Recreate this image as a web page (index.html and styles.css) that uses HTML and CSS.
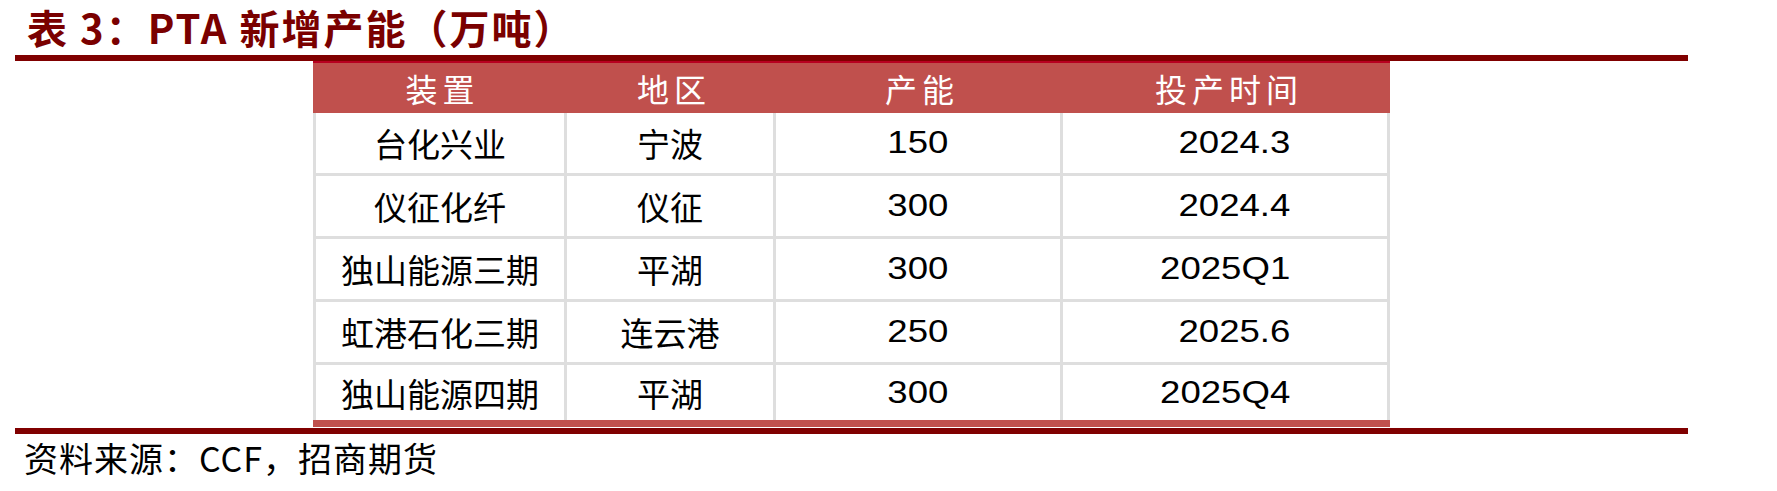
FILE: index.html
```
<!DOCTYPE html>
<html lang="zh-CN">
<head>
<meta charset="utf-8">
<title>表 3：PTA 新增产能（万吨）</title>
<link rel="stylesheet" href="styles.css">
</head>
<body>
<div class="page">
  <h1 class="title">表 3：PTA 新增产能（万吨）</h1>
  <div class="rule"></div>
  <div class="table-wrap">
    <div class="grid">
      <div class="th">装置</div>
      <div class="th">地区</div>
      <div class="th">产能</div>
      <div class="th">投产时间</div>

      <div class="td first">台化兴业</div>
      <div class="td">宁波</div>
      <div class="td"><span class="num">150</span></div>
      <div class="td"><span class="num shift">2024.3</span></div>

      <div class="td first">仪征化纤</div>
      <div class="td">仪征</div>
      <div class="td"><span class="num">300</span></div>
      <div class="td"><span class="num shift">2024.4</span></div>

      <div class="td first">独山能源三期</div>
      <div class="td">平湖</div>
      <div class="td"><span class="num">300</span></div>
      <div class="td"><span class="num">2025Q1</span></div>

      <div class="td first">虹港石化三期</div>
      <div class="td">连云港</div>
      <div class="td"><span class="num">250</span></div>
      <div class="td"><span class="num shift">2025.6</span></div>

      <div class="td first last">独山能源四期</div>
      <div class="td last">平湖</div>
      <div class="td last"><span class="num">300</span></div>
      <div class="td last"><span class="num">2025Q4</span></div>
    </div>
    <div class="endbar"></div>
  </div>
  <div class="rule bottom"></div>
  <p class="source">资料来源：CCF，招商期货</p>
</div>
</body>
</html>
```

FILE: styles.css
```
html, body {
  margin: 0;
  padding: 0;
  background: #ffffff;
}

.page {
  padding-left: 15px;
  width: 1673px;
  font-family: "Noto Sans CJK SC", "Noto Sans", sans-serif;
}

.title {
  margin: 0;
  height: 55px;
  line-height: 55px;
  padding-left: 12px;
  font-size: 40px;
  font-weight: 700;
  letter-spacing: 2px;
  color: #7a0000;
  white-space: nowrap;
}

.rule {
  height: 6px;
  background: #800000;
}

.rule.bottom {
  margin-top: 1px;
}

.table-wrap {
  margin-left: 298px;
  width: 1077px;
}

.grid {
  display: grid;
  grid-template-columns: 254px 209px 287px 327px;
  border-top: 2px solid #b80020;
}

.th {
  height: 50px;
  background: #c0504d;
  color: #ffffff;
  font-size: 32px;
  letter-spacing: 5px;
  padding-left: 5px;
  display: flex;
  align-items: center;
  justify-content: center;
}

.td {
  box-sizing: border-box;
  height: 63px;
  border-right: 3px solid #dedede;
  border-bottom: 3px solid #dedede;
  display: flex;
  align-items: center;
  justify-content: center;
  font-size: 33px;
  color: #000000;
}

.td.first {
  border-left: 3px solid #dedede;
}

.td.last {
  height: 55px;
  border-bottom: 0;
}

.num {
  display: inline-block;
  font-family: "Liberation Sans", Arial, sans-serif;
  font-size: 31px;
  transform: scaleX(1.18);
}

.num.shift {
  margin-left: 18px;
}

.endbar {
  height: 7px;
  background: #c0504d;
}

.source {
  margin: 0;
  height: 48px;
  line-height: 48px;
  padding-left: 9px;
  font-size: 34px;
  letter-spacing: 1px;
  color: #000000;
  white-space: nowrap;
}
```
